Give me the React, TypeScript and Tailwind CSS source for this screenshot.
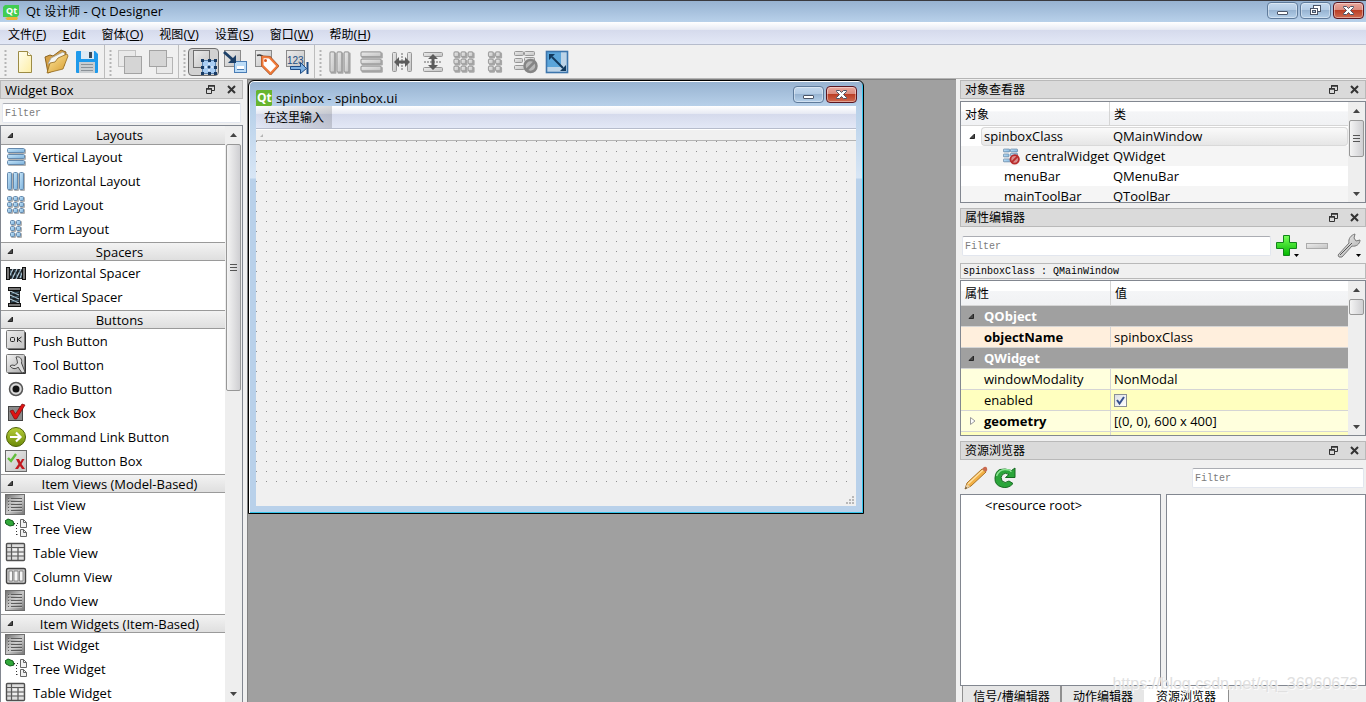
import React from "react";

type Box = [number, number, number, number];

function GradientDefs() {
  return (
    <svg width="0" height="0" className="absolute" aria-hidden="true">
      <defs>
        <linearGradient id="blueTile" x1="0" y1="0" x2="1" y2="1">
          <stop offset="0" stopColor="#c9e6f9" />
          <stop offset="1" stopColor="#7ab1dc" />
        </linearGradient>
        <linearGradient id="grayTile" x1="0" y1="0" x2="1" y2="1">
          <stop offset="0" stopColor="#ececec" />
          <stop offset="1" stopColor="#c2c2c2" />
        </linearGradient>
        <linearGradient id="steel" x1="0" y1="0" x2="1" y2="1">
          <stop offset="0" stopColor="#f4f4f4" />
          <stop offset="1" stopColor="#a9a9a9" />
        </linearGradient>
        <linearGradient id="listFace" x1="0" y1="0" x2="1" y2="1">
          <stop offset="0" stopColor="#6f6f6f" />
          <stop offset="0.5" stopColor="#c9c9c9" />
          <stop offset="1" stopColor="#747474" />
        </linearGradient>
        <linearGradient id="folder" x1="0" y1="0" x2="1" y2="1">
          <stop offset="0" stopColor="#ffe9a0" />
          <stop offset="1" stopColor="#d59a2c" />
        </linearGradient>
        <linearGradient id="paper" x1="0" y1="0" x2="1" y2="1">
          <stop offset="0" stopColor="#fffef0" />
          <stop offset="1" stopColor="#fdeea4" />
        </linearGradient>
        <linearGradient id="green" x1="0" y1="0" x2="0" y2="1">
          <stop offset="0" stopColor="#79ff5a" />
          <stop offset="1" stopColor="#03b800" />
        </linearGradient>
        <linearGradient id="olive" x1="0" y1="0" x2="0" y2="1">
          <stop offset="0" stopColor="#b7cf3a" />
          <stop offset="1" stopColor="#6c8a08" />
        </linearGradient>
      </defs>
    </svg>
  );
}

function Tiles({ boxes, blue, size = 22 }: { boxes: Box[]; blue?: boolean; size?: number }) {
  return (
    <svg width={size} height={size} viewBox="0 0 22 22" aria-hidden="true">
      {boxes.map(([x, y, w, h]) => (
        <g key={`${x}-${y}`}>
          <rect x={x + 1} y={y + 1} width={w} height={h} rx="1" fill="#000" opacity="0.3" />
          <rect
            x={x + 0.5}
            y={y + 0.5}
            width={w - 1}
            height={h - 1}
            rx="1"
            fill={blue ? "url(#blueTile)" : "url(#grayTile)"}
            stroke={blue ? "#6489ad" : "#a0a0a0"}
          />
        </g>
      ))}
    </svg>
  );
}

const rowsBoxes: Box[] = [[2, 2, 18, 5], [2, 8, 18, 5], [2, 14, 18, 5]];
const colsBoxes: Box[] = [[2, 2, 5, 18], [8, 2, 5, 18], [14, 2, 5, 18]];
const gridBoxes: Box[] = [2, 8, 14].flatMap((y) => [2, 8, 14].map((x): Box => [x, y, 5, 5]));
const formBoxes: Box[] = [2, 8, 14].flatMap((y) => [5, 11].map((x): Box => [x, y, 5, 5]));

function Icon({ size = 22, children }: { size?: number; children: React.ReactNode }) {
  return (
    <svg width={size} height={size} viewBox={`0 0 ${size} ${size}`} fill="none" aria-hidden="true">
      {children}
    </svg>
  );
}

const HSpacerIcon = () => (
  <Icon>
    <path d="M3 7h16v10H3z" fill="#1b2024" />
    <path d="M4 15l4-8M7 17l5-10M11 17l5-10M15 16l3-7" stroke="#b9cedb" strokeWidth="1.300" />
    <path d="M5 8l3 8M10 8l2 8M14 8l3 8" stroke="#4d7186" strokeWidth="0.800" />
    <rect x="1.500" y="5.500" width="3" height="12" fill="#777" stroke="#111" />
    <rect x="17.500" y="5.500" width="3" height="12" fill="#777" stroke="#111" />
  </Icon>
);

const VSpacerIcon = () => (
  <Icon>
    <path d="M5 4h10v14H5z" fill="#1b2024" />
    <path d="M5 5l9 4M5 9l9 4M5 13l9 4" stroke="#b9cedb" strokeWidth="1.300" />
    <path d="M14 6l-8 2M14 10l-8 2M14 14l-8 2" stroke="#4d7186" strokeWidth="0.800" />
    <rect x="3.500" y="1.500" width="12" height="3" fill="#777" stroke="#111" />
    <rect x="3.500" y="17.500" width="12" height="3" fill="#777" stroke="#111" />
  </Icon>
);

const PushButtonIcon = () => (
  <Icon>
    <rect x="3" y="2" width="18" height="18" rx="1" fill="#333" />
    <rect x="1.500" y="0.500" width="18" height="18" rx="1" fill="url(#grayTile)" stroke="#777" />
    <rect x="5.500" y="7.500" width="4" height="4" rx="1" stroke="#222" />
    <path d="M12.500 7v5M16.500 7l-3.500 2.500 3.500 2.500" stroke="#222" />
  </Icon>
);

const ToolButtonIcon = () => (
  <Icon>
    <rect x="3" y="2" width="18" height="18" rx="1" fill="#333" />
    <rect x="1.500" y="0.500" width="18" height="18" rx="1" fill="url(#steel)" stroke="#777" />
    <path
      d="M11 3c4-1 6.500 2 5.500 6l3.500 9-3 1-4-6c-2 2.500-6 2-8-1l2-1 3 .5 2.500-2.500-.5-3z"
      fill="#dcdcdc"
      stroke="#4a4a4a"
    />
  </Icon>
);

const RadioIcon = () => (
  <Icon>
    <circle cx="11" cy="11" r="6.500" fill="#d8d8d8" stroke="#555" strokeWidth="1.500" />
    <circle cx="11" cy="11" r="3.500" fill="#111" />
  </Icon>
);

const CheckIcon = () => (
  <Icon>
    <rect x="3.500" y="4.500" width="14" height="14" fill="#8b8b8b" stroke="#444" />
    <path d="M5 9l3-1 2.500 4L17 2l3 1-8.500 14H9.500z" fill="#e01414" stroke="#7a0b0b" strokeWidth="0.700" />
  </Icon>
);

const CommandLinkIcon = () => (
  <Icon>
    <circle cx="11" cy="11" r="9.500" fill="url(#olive)" stroke="#4f6208" />
    <path d="M5 11h10M11 6.500l4.500 4.500-4.500 4.500" stroke="#fff" strokeWidth="2.200" />
  </Icon>
);

const DialogBoxIcon = () => (
  <Icon>
    <rect x="0.500" y="0.500" width="21" height="21" fill="url(#grayTile)" stroke="#6b6b6b" />
    <path d="M3 8l3 3 5-7" stroke="#62bd3c" strokeWidth="2.400" />
    <path d="M11 9h3l1.500 3 1.500-3h2.500l-3 5 3.500 5h-3l-2-3-2 3h-3l3.500-5z" fill="#c2191f" />
  </Icon>
);

const ListIcon = () => (
  <Icon>
    <rect x="0.500" y="0.500" width="19" height="20" fill="url(#listFace)" stroke="#6e6e6e" />
    <path d="M3 4.500h1M3 7.500h1M3 10.500h1M3 13.500h1M3 16.500h1M6 4.500h11M6 7.500h11M6 10.500h11M6 13.500h11M6 16.500h11" stroke="#5c5c5c" />
    <path d="M3 5.500h14M3 8.500h14M3 11.500h14M3 14.500h14M3 17.500h14" stroke="#dadada" opacity="0.500" />
  </Icon>
);

const TreeIcon = () => (
  <Icon>
    <path d="M0 3l3-2 5 2 1 4-4 1-4-2z" fill="#32a83a" stroke="#0f5d1a" />
    <path d="M9 5.500h5M11.500 7v10M11.500 16.500h3" stroke="#333" strokeDasharray="1 2" />
    <path d="M15.500 1.500h3l3 3v5h-6zM15.500 11.500h3l3 3v4h-6z" fill="#f2f2f2" stroke="#666" />
    <path d="M18.500 1.500v3h3M18.500 11.500v3h3" stroke="#666" />
  </Icon>
);

const TableIcon = () => (
  <Icon>
    <rect x="1.500" y="1.500" width="18" height="17" rx="1" fill="#ddd" stroke="#505050" strokeWidth="1.400" />
    <path d="M2 5.500h17M2 10h17M2 14h17M6.500 2v16M13 5v13" stroke="#5a5a5a" strokeWidth="1.200" />
    <path d="M8 7.800h4M14 7.800h4M8 12h4M14 12h4" stroke="#fff" />
  </Icon>
);

const ColumnIcon = () => (
  <Icon>
    <rect x="1.500" y="2.500" width="19" height="15" rx="1.500" fill="#c9c9c9" stroke="#444" strokeWidth="1.400" />
    <path d="M4 5h3.500v10H4zM9 5h4v10H9zM14.500 5H18v10h-3.500z" fill="#f6f6f6" stroke="#777" strokeWidth="0.800" />
  </Icon>
);

const BrokenLayoutIcon = ({ red }: { red?: boolean }) => (
  <Icon size={24}>
    <g stroke={red ? "#5e7f9f" : "#979797"} fill={red ? "url(#blueTile)" : "url(#grayTile)"}>
      <rect x="0.500" y="1.500" width="9" height="4" rx="1" />
      <rect x="10.500" y="1.500" width="10" height="4" rx="1" />
      <rect x="0.500" y="8.500" width="8" height="4" rx="1" />
      <rect x="10.500" y="7.500" width="10" height="4" rx="1" />
      <rect x="0.500" y="15.500" width="10" height="4" rx="1" />
    </g>
    <circle cx="16.500" cy="16" r="6" fill={red ? "#d88d8d" : "#b8b8b8"} stroke={red ? "#b92c2c" : "#858585"} strokeWidth="2.500" />
    <path d="M12.500 20l8-8" stroke={red ? "#b92c2c" : "#858585"} strokeWidth="2.500" />
  </Icon>
);

const NewIcon = () => (
  <Icon size={24}>
    <path d="M5.500 1.500h9l4 4v17h-13z" fill="url(#paper)" stroke="#9c8b45" />
    <path d="M14.500 1.500v4h4" fill="#fff" stroke="#9c8b45" />
  </Icon>
);

const OpenIcon = () => (
  <Icon size={26}>
    <path d="M2 8l5-2 3 1 8-6 5 2-2 14-16 7z" fill="#d6a044" stroke="#8b6420" />
    <path d="M5 15l3-6 12-6 2 2-5 10z" fill="#f5f5f0" stroke="#a5a297" strokeWidth="0.800" />
    <path d="M4 24l3-10 5-1 3-4 9-4 1 2-5 13z" fill="url(#folder)" stroke="#94691d" strokeWidth="0.800" />
  </Icon>
);

const SaveIcon = () => (
  <Icon size={24}>
    <path d="M1 2q0-1 1-1h18l3 3v18q0 1-1 1H2q-1 0-1-1z" fill="#1f9aeb" />
    <path d="M6 1h13v8H6z" fill="#dceaf5" />
    <path d="M14 2h3v6h-3z" fill="#3b4b59" />
    <path d="M4 12h16v11H4z" fill="#c9cdd0" />
    <path d="M6 14.500h12M6 17.500h12M6 20.500h12" stroke="#8b9298" />
  </Icon>
);

const RaiseIcon = ({ back }: { back?: boolean }) => (
  <Icon size={26}>
    {back && <rect x="8.500" y="8.500" width="16" height="16" fill="#e9e9e9" stroke="#b4b4b4" />}
    <rect x="1.500" y="1.500" width="17" height="16" fill={back ? "#d5d5d5" : "#e9e9e9"} stroke={back ? "#a3a3a3" : "#c2c2c2"} />
    {!back && <rect x="7.500" y="7.500" width="17" height="17" fill="#d5d5d5" stroke="#a3a3a3" />}
  </Icon>
);

const EditWidgetsIcon = () => (
  <Icon size={26}>
    <rect x="2.500" y="1.500" width="16" height="17" fill="url(#grayTile)" stroke="#6f6f6f" />
    <rect x="11.500" y="11.500" width="13" height="13" fill="#a9cdf3" stroke="#5b84b0" />
    <path d="M10 10h3v3h-3zM17 10h3v3h-3zM23 10h3v3h-3zM10 17h3v3h-3zM23 17h3v3h-3zM10 23h3v3h-3zM17 23h3v3h-3zM23 23h3v3h-3z" fill="#183a63" />
    <path d="M18 14v8M14 18h8" stroke="#fff" strokeDasharray="2 1" />
    <circle cx="18" cy="18" r="1.500" fill="#183a63" />
  </Icon>
);

const SignalsIcon = () => (
  <Icon size={26}>
    <rect x="2.500" y="1.500" width="16" height="16" fill="url(#grayTile)" stroke="#8a8a8a" />
    <rect x="12.500" y="12.500" width="12" height="11" fill="#bcdcf7" stroke="#4a7db5" />
    <path d="M15 18.500h7" stroke="#fff" strokeWidth="3" />
    <path d="M15 20.500h7" stroke="#4a7db5" />
    <path d="M2 3l9 8" stroke="#1d4068" strokeWidth="3" />
    <path d="M14 6v8H6z" fill="#1d4068" />
  </Icon>
);

const BuddyIcon = () => (
  <Icon size={26}>
    <rect x="2.500" y="1.500" width="16" height="16" fill="url(#grayTile)" stroke="#8a8a8a" />
    <path d="M4 6.500q4-2 8 3" stroke="#3b3b3b" strokeWidth="1.500" />
    <path d="M9.500 8l7 .500 8 8.500-7 7.500-8-8z" fill="#fff" stroke="#8e4a26" strokeWidth="3" />
    <path d="M9.500 8l7 .500 8 8.500-7 7.500-8-8z" fill="#fff" stroke="#f07a3a" strokeWidth="2" />
    <circle cx="12.500" cy="11.500" r="1.500" fill="#d9561d" />
  </Icon>
);

const TabOrderIcon = () => (
  <Icon size={26}>
    <rect x="2.500" y="1.500" width="18" height="16" fill="url(#grayTile)" stroke="#8a8a8a" />
    <text x="3" y="15" fontSize="10" fill="#254f83" fontFamily="Liberation Sans, sans-serif">123</text>
    <path d="M6.500 17.500h10v-4l6 6-6 5v-4h-10z" fill="#7fb2e2" stroke="#1f4c85" />
    <path d="M23.500 13v12" stroke="#1f4c85" strokeWidth="2" />
  </Icon>
);

const HSplitIcon = () => (
  <Icon size={24}>
    <g fill="url(#grayTile)" stroke="#979797">
      <rect x="2.500" y="2.500" width="4" height="19" rx="1" />
      <rect x="17.500" y="2.500" width="4" height="19" rx="1" />
    </g>
    <path d="M12 3v18" stroke="#666" strokeDasharray="2 1" />
    <path d="M4 12l5-5v3.500h6V7l5 5-5 5v-3.500H9V17z" fill="#5c5c5c" />
  </Icon>
);

const VSplitIcon = () => (
  <Icon size={24}>
    <g fill="url(#grayTile)" stroke="#979797">
      <rect x="2.500" y="2.500" width="19" height="4" rx="1" />
      <rect x="2.500" y="17.500" width="19" height="4" rx="1" />
    </g>
    <path d="M3 12h18" stroke="#666" strokeDasharray="2 1" />
    <path d="M12 4l5 5h-3.500v6H17l-5 5-5-5h3.500V9H7z" fill="#5c5c5c" />
  </Icon>
);

const AdjustIcon = () => (
  <Icon size={24}>
    <rect x="1" y="1" width="22" height="22" fill="#bcd4e8" />
    <path d="M1 1h15v16H1z" fill="#5ba5da" />
    <rect x="1.500" y="1.500" width="21" height="21" stroke="#3d76ad" strokeWidth="1.600" />
    <path d="M7 7l11 11" stroke="#123a5e" strokeWidth="2" />
    <path d="M4 4h6l-6 6zM21 21h-6l6-6z" fill="#123a5e" />
  </Icon>
);

function QtLogo({ pencil }: { pencil?: boolean }) {
  return (
    <svg width="16" height="16" viewBox="0 0 16 16" aria-hidden="true">
      <path d={pencil ? "M2 1h14v10l-2 2H0V3z" : "M1 0h15v15l-1 1H0V1z"} fill={pencil ? "#41cd52" : "#68b52e"} />
      <text x={pencil ? 3 : 1} y={pencil ? 10 : 12} fontSize={pencil ? 9 : 12} fontWeight="700" fill="#fff" fontFamily="Open Sans, sans-serif">Qt</text>
      {pencil && <path d="M2 14l3-1h9l1 1-1 2H4z" fill="#e9b53a" />}
    </svg>
  );
}

type Kind = "min" | "restore" | "close";

function CaptionButton({ kind }: { kind: Kind }) {
  const label = { min: "Minimize", restore: "Restore", close: "Close" }[kind];
  const tone =
    kind === "close"
      ? "border-[#5b1620] bg-[linear-gradient(#eaa79c_0%,#d98a7d_48%,#bb3f26_50%,#cf6a50_100%)]"
      : "border-[#5f7b9b] bg-[linear-gradient(#c3d8ee_0%,#b3cbe4_48%,#98b4d2_50%,#b5d0ea_100%)]";
  return (
    <button aria-label={label} className={`flex h-[17px] w-[31px] items-center justify-center rounded-sm border shadow-[inset_0_0_0_1px_rgba(255,255,255,0.4)] ${tone}`}>
      <svg width="13" height="11" viewBox="0 0 13 11" fill="#fff" stroke="#4b5568" aria-hidden="true">
        {kind === "min" && <rect x="1.500" y="6.500" width="10" height="3" rx="0.500" />}
        {kind === "restore" && (
          <>
            <rect x="4.500" y="0.500" width="7" height="6" />
            <rect x="1.500" y="3.500" width="7" height="6" />
            <rect x="3.500" y="5.500" width="3" height="2" fill="#a9c2dc" />
          </>
        )}
        {kind === "close" && <path d="M1.500 1.500h3l2 2 2-2h3v1L8.500 5.500l3 3v1h-3l-2-2-2 2h-3v-1l3-3-3-3z" />}
      </svg>
    </button>
  );
}

function DockTitle({ title, cjk }: { title: string; cjk?: boolean }) {
  return (
    <header className="flex h-[19px] shrink-0 items-center border border-[#b9b9b9] bg-[#dadada] pr-[6px] pl-1">
      <h2 className={`flex-1 truncate ${cjk ? "text-[12px]" : ""}`}>{title}</h2>
      <button aria-label={`Float ${title}`} className="mr-3">
        <svg width="9" height="9" viewBox="0 0 9 9" fill="none" stroke="#333" aria-hidden="true">
          <path d="M2.500 3V.500h6v5H6" />
          <path d="M2 1h7M0 4h6" strokeWidth="1.500" />
          <path d="M.500 3.500h5v5h-5z" />
        </svg>
      </button>
      <button aria-label={`Close ${title}`}>
        <svg width="9" height="9" viewBox="0 0 9 9" stroke="#333" strokeWidth="2" aria-hidden="true">
          <path d="M1 1l7 7M8 1L1 8" />
        </svg>
      </button>
    </header>
  );
}

function FilterBox({ id, className }: { id: string; className: string }) {
  return (
    <input
      id={id}
      aria-label="Filter"
      placeholder="Filter"
      className={`h-5 min-w-0 rounded-xs border border-[#e2e6ee] border-t-[#abadb3] bg-white px-[2px] font-['Liberation_Mono','Noto_Sans_CJK_SC',monospace] text-[10px] text-black outline-none placeholder:text-[#7c7c7c] ${className}`}
    />
  );
}

function ScrollBar({ thumb, grip }: { thumb: string; grip?: boolean }) {
  return (
    <div className="flex w-[17px] shrink-0 flex-col items-center bg-[#eeeeee]" aria-hidden="true">
      <div className="flex h-[18px] shrink-0 items-center">
        <svg width="7" height="4" viewBox="0 0 7 4"><path d="M0 4l3.500-4L7 4z" fill="#444" /></svg>
      </div>
      <div className={`flex w-[15px] items-center justify-center rounded-xs border border-[#979797] bg-linear-to-r from-[#f4f4f4] to-[#cfcfd2] ${thumb}`}>
        {grip && (
          <svg width="7" height="8" viewBox="0 0 7 8" stroke="#555"><path d="M0 .500h7M0 3.500h7M0 6.500h7" /></svg>
        )}
      </div>
      <div className="flex-1" />
      <div className="flex h-4 shrink-0 items-center">
        <svg width="7" height="4" viewBox="0 0 7 4"><path d="M0 0l3.500 4L7 0z" fill="#444" /></svg>
      </div>
    </div>
  );
}

function Expanded() {
  return (
    <svg width="7" height="7" viewBox="0 0 7 7" aria-hidden="true">
      <path d="M5.500 1v4.500H1z" fill="#484848" stroke="#262626" />
    </svg>
  );
}

const widgetGroups: { name: string; items: [string, React.ReactNode][] }[] = [
  {
    name: "Layouts",
    items: [
      ["Vertical Layout", <Tiles blue boxes={rowsBoxes} />],
      ["Horizontal Layout", <Tiles blue boxes={colsBoxes} />],
      ["Grid Layout", <Tiles blue boxes={gridBoxes} />],
      ["Form Layout", <Tiles blue boxes={formBoxes} />],
    ],
  },
  {
    name: "Spacers",
    items: [
      ["Horizontal Spacer", <HSpacerIcon />],
      ["Vertical Spacer", <VSpacerIcon />],
    ],
  },
  {
    name: "Buttons",
    items: [
      ["Push Button", <PushButtonIcon />],
      ["Tool Button", <ToolButtonIcon />],
      ["Radio Button", <RadioIcon />],
      ["Check Box", <CheckIcon />],
      ["Command Link Button", <CommandLinkIcon />],
      ["Dialog Button Box", <DialogBoxIcon />],
    ],
  },
  {
    name: "Item Views (Model-Based)",
    items: [
      ["List View", <ListIcon />],
      ["Tree View", <TreeIcon />],
      ["Table View", <TableIcon />],
      ["Column View", <ColumnIcon />],
      ["Undo View", <ListIcon />],
    ],
  },
  {
    name: "Item Widgets (Item-Based)",
    items: [
      ["List Widget", <ListIcon />],
      ["Tree Widget", <TreeIcon />],
      ["Table Widget", <TableIcon />],
    ],
  },
];

function WidgetBox() {
  return (
    <aside className="flex w-[243px] shrink-0 flex-col pt-px">
      <DockTitle title="Widget Box" />
      <FilterBox id="widget-filter" className="mx-[2px] mt-1 mb-[2px]" />
      <div className="flex min-h-0 flex-1 border border-b-0 border-[#828790] bg-white">
        <div className="min-w-0 flex-1 overflow-hidden">
          {widgetGroups.map((group, i) => (
            <section key={group.name} className="pb-px">
              <button
                className={`flex h-[19px] w-full items-center border-b border-[#9a9a9a] bg-linear-to-b from-[#f3f3f3] to-[#dfdfdf] pl-[6px] ${i ? "border-t" : ""}`}
              >
                <Expanded />
                <span className="flex-1 text-center">{group.name}</span>
              </button>
              <ul>
                {group.items.map(([label, icon]) => (
                  <li key={label} className="flex h-6 items-center gap-[6px] pl-1">
                    {icon}
                    {label}
                  </li>
                ))}
              </ul>
            </section>
          ))}
        </div>
        <ScrollBar thumb="h-[247px]" grip />
      </div>
    </aside>
  );
}

const menus: [string, string][] = [
  ["文件", "F"],
  ["", "Edit"],
  ["窗体", "O"],
  ["视图", "V"],
  ["设置", "S"],
  ["窗口", "W"],
  ["帮助", "H"],
];

const toolGroups: [string, React.ReactNode][][] = [
  [["New", <NewIcon />], ["Open", <OpenIcon />], ["Save", <SaveIcon />]],
  [["Bring to front", <RaiseIcon />], ["Send to back", <RaiseIcon back />]],
  [["Edit widgets", <EditWidgetsIcon />], ["Edit signals", <SignalsIcon />], ["Edit buddies", <BuddyIcon />], ["Edit tab order", <TabOrderIcon />]],
  [
    ["Lay out horizontally", <Tiles size={26} boxes={colsBoxes} />],
    ["Lay out vertically", <Tiles size={26} boxes={rowsBoxes} />],
    ["Horizontal splitter", <HSplitIcon />],
    ["Vertical splitter", <VSplitIcon />],
    ["Lay out in a grid", <Tiles size={26} boxes={gridBoxes} />],
    ["Lay out in a form", <Tiles size={26} boxes={formBoxes} />],
    ["Break layout", <BrokenLayoutIcon />],
    ["Adjust size", <AdjustIcon />],
  ],
];

function ToolBar() {
  return (
    <div role="toolbar" className="flex h-[34px] shrink-0 items-stretch border-b border-[#b4b4b4] bg-[#f0f0f0]">
      {toolGroups.map((group, g) => (
        <div key={g} className="flex items-center border-r border-[#bdbdbd] pr-[2px] pl-1 last:border-r-0">
          <svg width="3" height="28" viewBox="0 0 3 28" className="mr-[2px]" aria-hidden="true">
            <path d="M1.500 2v26" stroke="#b5b5b5" strokeWidth="2" strokeDasharray="2 2" />
          </svg>
          {group.map(([label, icon]) => (
            <button
              key={label}
              aria-label={label}
              className={`flex h-7 w-[31px] items-center justify-center rounded-sm border ${
                label === "Edit widgets" ? "border-[#6f6f6f] bg-[#d2d2d2]" : "border-transparent"
              }`}
            >
              {icon}
            </button>
          ))}
        </div>
      ))}
    </div>
  );
}

function FormWindow() {
  return (
    <section className="flex h-[434px] w-[616px] flex-col rounded-t-md border border-black bg-[linear-gradient(#98b3d1_0px,#b7d0e9_25px,#d8e6f5_97px,#b9d1ea_98px)] p-px shadow-[inset_1px_1px_0_#ffffff,inset_-1px_-1px_0_#33c5ec]">
      <header className="flex h-6 shrink-0 items-end rounded-t-sm bg-linear-to-b from-[#98b3d1] to-[#b7d0e9] pr-[5px] pl-[6px]">
        <QtLogo />
        <h2 className="flex-1 pl-1">spinbox - spinbox.ui</h2>
        <div className="flex gap-[2px] self-start pt-1">
          <CaptionButton kind="min" />
          <CaptionButton kind="close" />
        </div>
      </header>
      <div className="mx-[6px] mb-[6px] flex min-h-0 flex-1 flex-col bg-[#f0f0f0]">
        <div className="flex h-[23px] shrink-0 border-b border-[#b6bccc] bg-[linear-gradient(#ffffff_0%,#e8ebf4_34%,#d5daec_36%,#e3e8f6_100%)]">
          <button className="bg-linear-to-r from-black/0 to-black/15 px-2 pt-[2px] text-[12px]">在这里输入</button>
        </div>
        <div className="flex h-3 shrink-0 items-center border-t border-b border-t-white border-b-[#b4b4b4] pl-1">
          <svg width="3" height="3" viewBox="0 0 3 3" aria-hidden="true"><path d="M3 0v3H0z" fill="#b5b5b5" /></svg>
        </div>
        <svg className="h-[342px] w-full" aria-hidden="true">
          <defs>
            <pattern id="dots" width="10" height="10" patternUnits="userSpaceOnUse">
              <rect width="1" height="1" fill="#8f8f8f" />
            </pattern>
          </defs>
          <rect width="100%" height="100%" fill="url(#dots)" />
        </svg>
        <div className="flex flex-1 items-end justify-end pr-[2px] pb-[2px]">
          <svg width="9" height="9" viewBox="0 0 9 9" fill="#b8b8b8" aria-hidden="true">
            <path d="M7 1h2v2H7zM4 4h2v2H4zM7 4h2v2H7zM1 7h2v2H1zM4 7h2v2H4zM7 7h2v2H7z" />
          </svg>
        </div>
      </div>
    </section>
  );
}

const headCell = "border-b border-[#d5d5d5] bg-[linear-gradient(#ffffff_0%,#ffffff_40%,#f4f5f7_42%,#f1f2f4_100%)] pt-[2px] pl-1 text-left text-[12px] font-normal";

function ObjectInspector() {
  return (
    <section className="flex flex-col">
      <DockTitle title="对象查看器" cjk />
      <div className="mt-[2px] flex h-[102px] overflow-hidden border border-[#828790] bg-white">
        <div className="min-w-0 flex-1 overflow-hidden">
          <table className="w-full table-fixed border-separate border-spacing-0">
            <thead>
              <tr className="h-6">
                <th className={`${headCell} w-[149px] border-r`}>对象</th>
                <th className={headCell}>类</th>
              </tr>
            </thead>
            <tbody>
              <tr className="h-5">
                <td className="p-0">
                  <div className="flex h-5 items-center pl-2">
                    <Expanded />
                    <span className="ml-[5px] flex h-[19px] flex-1 items-center rounded-l-sm border border-r-0 border-[#d9d9d9] bg-linear-to-b from-[#fafafa] to-[#e6e6e6] pl-[2px]">spinboxClass</span>
                  </div>
                </td>
                <td className="p-0">
                  <div className="flex h-[19px] items-center rounded-r-sm border border-l-0 border-[#d9d9d9] bg-linear-to-b from-[#fafafa] to-[#e6e6e6] pl-[3px]">QMainWindow</div>
                </td>
              </tr>
              <tr className="h-5 bg-[#f5f5f5]">
                <td className="p-0">
                  <div className="flex h-5 items-center gap-[5px] pl-[42px] whitespace-nowrap">
                    <svg width="17" height="17" viewBox="0 0 24 24" className="shrink-0" aria-hidden="true"><BrokenLayoutIcon red /></svg>
                    centralWidget
                  </div>
                </td>
                <td className="p-0 pl-[3px]">QWidget</td>
              </tr>
              <tr className="h-5">
                <td className="p-0 pl-[43px]">menuBar</td>
                <td className="p-0 pl-[3px]">QMenuBar</td>
              </tr>
              <tr className="h-5 bg-[#f5f5f5]">
                <td className="p-0 pl-[43px]">mainToolBar</td>
                <td className="p-0 pl-[3px]">QToolBar</td>
              </tr>
            </tbody>
          </table>
        </div>
        <ScrollBar thumb="h-[37px] shrink-0" grip />
      </div>
    </section>
  );
}

const groupRow = "h-[21px] border-b border-[#d5d5d5] bg-[#a0a0a0] p-0 text-left font-bold text-white";
const cell = "h-[21px] border-b border-[#d5d5d5] p-0";

function PropertyEditor() {
  return (
    <section className="mt-[5px] flex flex-col">
      <DockTitle title="属性编辑器" cjk />
      <div className="flex h-9 items-center pt-[2px] pr-1 pl-[2px]">
        <FilterBox id="property-filter" className="flex-1" />
        <button aria-label="Add dynamic property" className="ml-1">
          <svg width="25" height="26" viewBox="0 0 25 26" aria-hidden="true">
            <path d="M8.500 2.500h6v7h7v6h-7v7h-6v-7h-7v-6h7z" fill="url(#green)" stroke="#12851a" />
            <path d="M19 21h5l-2.500 3z" fill="#000" />
          </svg>
        </button>
        <button aria-label="Remove dynamic property" className="ml-[6px]">
          <svg width="23" height="26" viewBox="0 0 23 26" aria-hidden="true">
            <rect x="0.500" y="10.500" width="21" height="5" fill="url(#grayTile)" stroke="#ababab" />
          </svg>
        </button>
        <button aria-label="Configure property editor" className="ml-2">
          <svg width="25" height="26" viewBox="0 0 25 26" aria-hidden="true">
            <path d="M1 22l11-12c-1-4 2-8 6-9l-1 4 2 3 4-1c0 4-4 7-8 6L5 24q-4 1-4-2z" fill="url(#steel)" stroke="#777" />
            <path d="M3 22L15 10" stroke="#555" />
            <path d="M19 21h5l-2.500 3z" fill="#000" />
          </svg>
        </button>
      </div>
      <p className="h-4 border border-[#b9b9b9] pl-[2px] font-['Liberation_Mono',monospace] text-[10px] leading-4 whitespace-pre">spinboxClass : QMainWindow</p>
      <div className="mt-px flex h-[156px] overflow-hidden border border-[#828790] bg-white">
        <div className="min-w-0 flex-1 overflow-hidden">
          <table className="w-full table-fixed border-separate border-spacing-0">
            <thead>
              <tr className="h-[25px]">
                <th className={`${headCell} w-[150px] border-r`}>属性</th>
                <th className={headCell}>值</th>
              </tr>
            </thead>
            <tbody>
              <tr>
                <th colSpan={2} className={groupRow}><div className="flex items-center gap-[9px] pl-[7px]"><Expanded />QObject</div></th>
              </tr>
              <tr className="bg-[#ffefdd]">
                <td className={`${cell} border-r pl-[23px] font-bold`}>objectName</td>
                <td className={`${cell} pl-[3px]`}>spinboxClass</td>
              </tr>
              <tr>
                <th colSpan={2} className={groupRow}><div className="flex items-center gap-[9px] pl-[7px]"><Expanded />QWidget</div></th>
              </tr>
              <tr className="bg-[#ffffdd]">
                <td className={`${cell} border-r pl-[23px]`}>windowModality</td>
                <td className={`${cell} pl-[3px]`}>NonModal</td>
              </tr>
              <tr className="bg-[#ffffbf]">
                <td className={`${cell} border-r pl-[23px]`}><label htmlFor="enabled">enabled</label></td>
                <td className={`${cell} pl-[3px]`}>
                  <span className="grid h-[13px] w-[13px] grid-cols-1">
                    <input id="enabled" type="checkbox" defaultChecked className="col-start-1 row-start-1 h-[13px] w-[13px] appearance-none border border-[#8a8f96] bg-linear-to-br from-[#dcdfe3] to-white" />
                    <svg width="13" height="13" viewBox="0 0 13 13" className="pointer-events-none col-start-1 row-start-1" aria-hidden="true">
                      <path d="M3 6l2.500 3.500L10 3" stroke="#35508c" strokeWidth="2" fill="none" />
                    </svg>
                  </span>
                </td>
              </tr>
              <tr className="bg-[#ffffdd]">
                <td className={`${cell} border-r font-bold`}>
                  <div className="flex items-center gap-2 pl-[9px]">
                    <svg width="6" height="8" viewBox="0 0 6 8" fill="#fff" stroke="#999" aria-hidden="true"><path d="M.500 .500L5 4 .500 7.500z" /></svg>
                    geometry
                  </div>
                </td>
                <td className={`${cell} pl-[3px]`}>[(0, 0), 600 x 400]</td>
              </tr>
              <tr className="bg-[#ffffbf]">
                <td className={`${cell} border-r`} />
                <td className={cell} />
              </tr>
            </tbody>
          </table>
        </div>
        <ScrollBar thumb="h-4 shrink-0" />
      </div>
    </section>
  );
}

function ResourceBrowser() {
  return (
    <section className="mt-[5px] flex min-h-0 flex-1 flex-col">
      <DockTitle title="资源浏览器" cjk />
      <div className="flex h-[34px] shrink-0 items-center pt-[2px] pr-[2px] pl-1">
        <button aria-label="Edit resources">
          <svg width="24" height="24" viewBox="0 0 24 24" aria-hidden="true">
            <path d="M1 23l2-6L18 3l4 3L7 20z" fill="#f2b045" stroke="#a9742a" />
            <path d="M4 18L19 4" stroke="#ffe0a0" strokeWidth="1.500" />
            <path d="M18 3l2-2q2-1 3 1t-1 4z" fill="#c96a50" />
            <path d="M1 23l2-5 3 2.500z" fill="#e8cfa4" />
            <path d="M1 23l1-2 1 1z" fill="#222" />
          </svg>
        </button>
        <button aria-label="Reload" className="ml-[5px]">
          <svg width="24" height="24" viewBox="0 0 24 24" aria-hidden="true">
            <path d="M22 2v9.500h-9.500l3.500-3q-4-2.500-6.500 0t-.500 6.500q3 3 7 0l4 2.500q-4.500 5.500-11.500 3.500T2 12 7 3.500t11.500 1z" fill="#2ba53a" stroke="#14691f" />
            <path d="M3.500 10q2.500-6.500 8.500-6.500t6 2.500" stroke="#8be292" strokeWidth="1.500" fill="none" />
          </svg>
        </button>
        <FilterBox id="resource-filter" className="ml-auto w-[172px]" />
      </div>
      <div className="flex min-h-0 flex-1 gap-[5px]">
        <div className="w-[201px] border border-[#828790] bg-white pt-[2px] pl-6">&lt;resource root&gt;</div>
        <div className="flex-1 border border-[#828790] bg-white" />
      </div>
      <div role="tablist" className="flex h-4 shrink-0 overflow-hidden pl-[2px] text-[12px] leading-[17px]">
        <button role="tab" className="h-5 w-[100px] border-r-2 border-l border-[#8f8f8f] bg-[#e6e6e6]">信号/槽编辑器</button>
        <button role="tab" className="h-5 w-[82px] bg-[#e6e6e6]">动作编辑器</button>
        <button role="tab" aria-selected="true" className="h-5 w-[85px] border-r border-[#8f8f8f] bg-white">资源浏览器</button>
      </div>
    </section>
  );
}

export default function App() {
  return (
    <div className="relative flex h-screen flex-col overflow-hidden bg-[#f0f0f0] font-['Open_Sans','Noto_Sans_CJK_SC',sans-serif] text-[13px] leading-4 text-black">
      <GradientDefs />
      <header className="flex h-[22px] shrink-0 items-center border-t border-[#3a3a3f] bg-linear-to-b from-[#97b2d1] to-[#b8d1ea] pr-[2px] pl-[3px]">
        <QtLogo pencil />
        <h1 className="flex-1 pl-[7px]">Qt <span className="text-[12px]">设计师</span> - Qt Designer</h1>
        <div className="flex gap-[2px] pb-[2px]">
          <CaptionButton kind="min" />
          <CaptionButton kind="restore" />
          <CaptionButton kind="close" />
        </div>
      </header>
      <nav className="flex h-[23px] shrink-0 items-center border-b border-[#b6bccc] bg-[linear-gradient(#ffffff_0%,#e8ebf4_34%,#d5daec_36%,#e3e8f6_100%)] pt-[2px]">
        {menus.map(([word, key]) => (
          <button key={key} className="px-2">
            {word ? <><span className="text-[12px]">{word}</span>(<u>{key}</u>)</> : <><u>E</u>dit</>}
          </button>
        ))}
      </nav>
      <ToolBar />
      <div className="flex min-h-0 flex-1">
        <WidgetBox />
        <main className="ml-1 min-w-0 flex-1 overflow-hidden border-t border-l border-[#828282] bg-[#a0a0a0]">
          <FormWindow />
        </main>
        <aside className="ml-1 flex w-[406px] shrink-0 flex-col pt-px">
          <ObjectInspector />
          <PropertyEditor />
          <ResourceBrowser />
        </aside>
      </div>
      <p className="pointer-events-none absolute right-2 bottom-2 font-['Liberation_Sans',sans-serif] text-[16px] leading-5 text-[#e0e0e0] [text-shadow:1px_1px_0_rgba(255,255,255,0.8)]">
        https://blog.csdn.net/qq_36960673
      </p>
    </div>
  );
}
